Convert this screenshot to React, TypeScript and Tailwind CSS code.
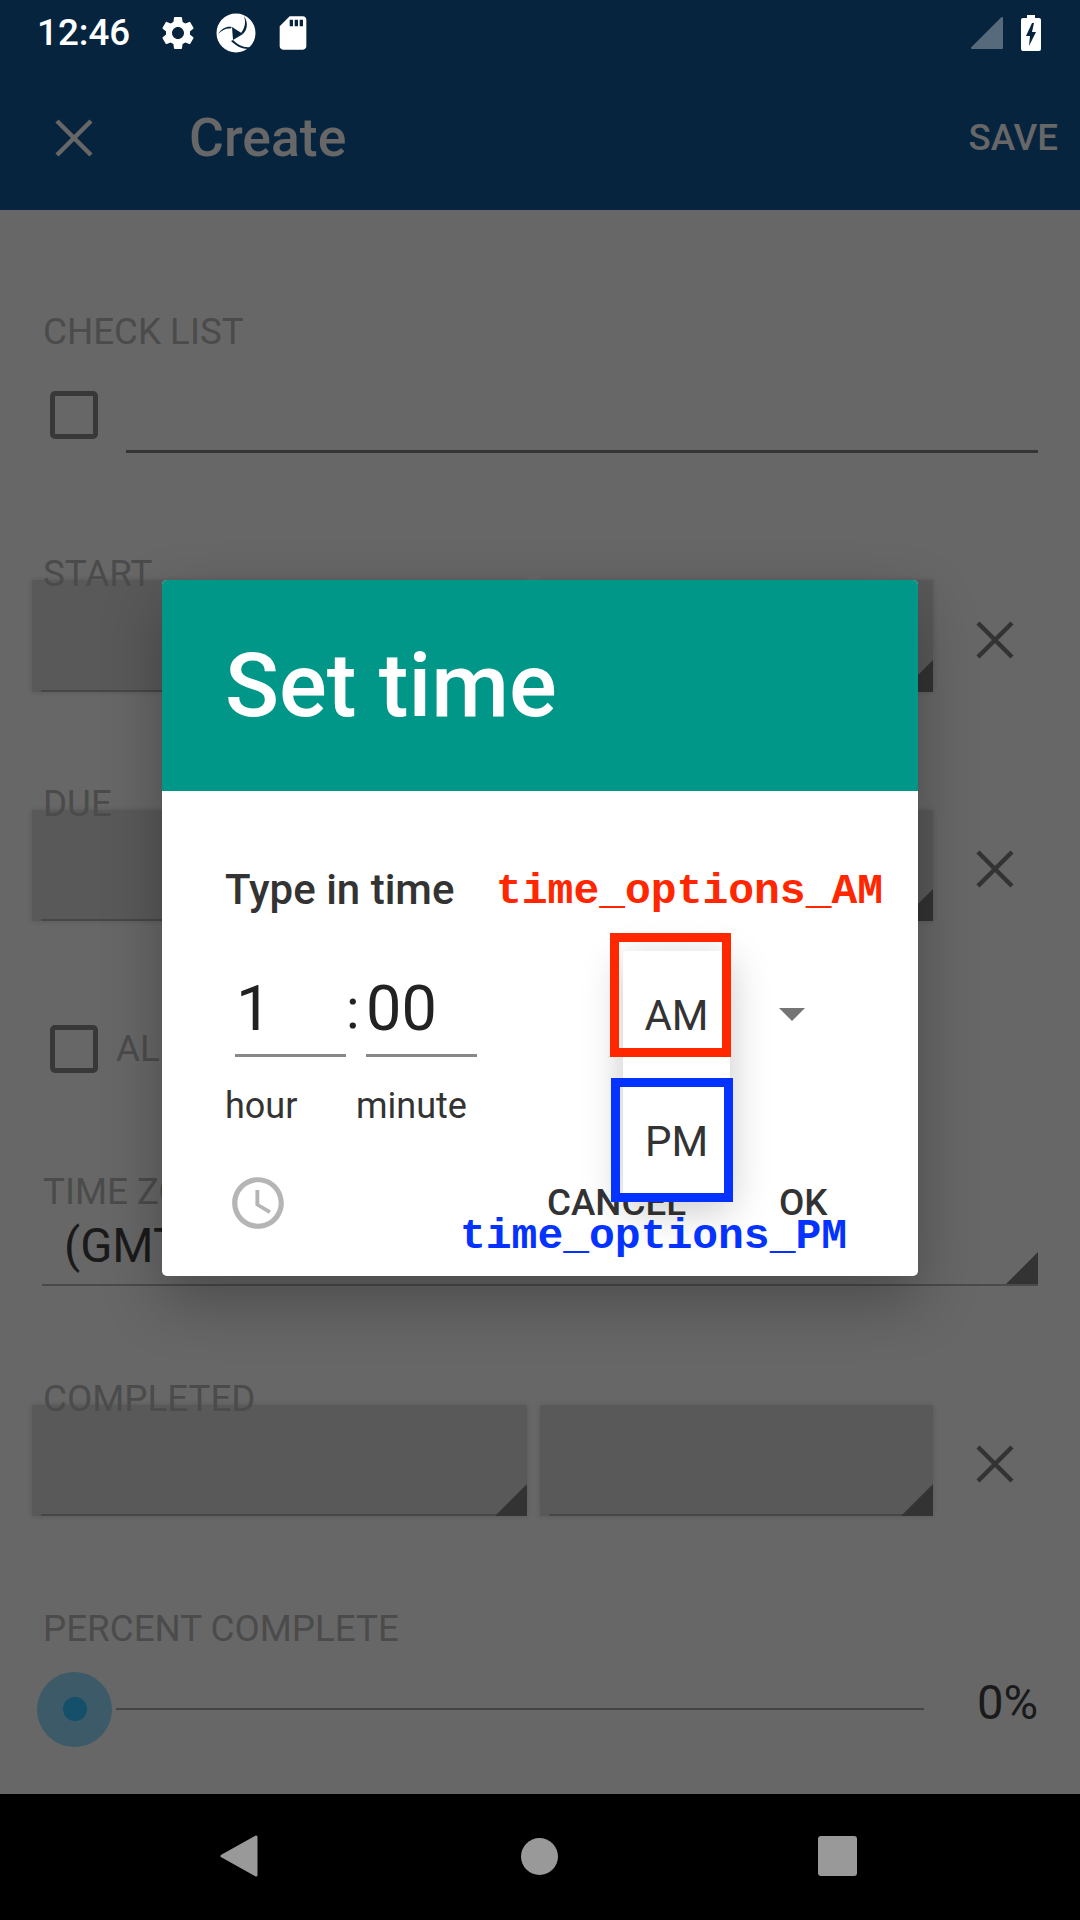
import React from 'react';
import { MdAccessTime, MdSdCard, MdSettings } from 'react-icons/md';

const CloseIcon: React.FC<{ color: string; size?: number }> = ({ color, size = 38 }) => (
  <svg width={size} height={size} viewBox="0 0 38 38">
    <path d="M2 2 L36 36 M36 2 L2 36" stroke={color} strokeWidth="4.5" fill="none" />
  </svg>
);

const Label: React.FC<{ text: string; className?: string }> = ({ text, className = '' }) => (
  <div className={`relative z-10 h-[40px] pl-[43px] text-[36.75px] leading-[42px] text-[#4b4b4b] ${className}`}>{text}</div>
);

const Checkbox: React.FC = () => (
  <div className="w-[48px] h-[48px] shrink-0 rounded-[5px] border-[5px] border-[#383838]" />
);

const Corner: React.FC = () => (
  <svg className="absolute right-0 bottom-0" width="32" height="32" viewBox="0 0 32 32">
    <path d="M32 0 L32 32 L0 32 Z" fill="#333333" />
  </svg>
);

const Spinner: React.FC<{ className: string }> = ({ className }) => (
  <div className={`relative bg-[#595959] shadow-[0_0_5px_rgba(0,0,0,0.14)] ${className}`}>
    <div className="absolute left-[9px] right-0 bottom-0 h-[2px] bg-[#474747]" />
    <Corner />
  </div>
);

const DateRow: React.FC<{ height: number }> = ({ height }) => (
  <div className="flex items-center mt-[-13px]" style={{ height }}>
    <div className="flex h-full pl-[32px] gap-[13px] w-[933px]">
      <Spinner className="w-[495px] h-full" />
      <Spinner className="w-[393px] h-full" />
    </div>
    <div className="ml-[43px] pt-[7px]">
      <CloseIcon color="#333333" />
    </div>
  </div>
);

const Logo: React.FC = () => (
  <svg width="40" height="40" viewBox="0 0 40 40">
    <circle cx="20" cy="20" r="19.5" fill="#ffffff" />
    <path d="M16 14 L27 21 L17 27 Z" fill="#07243f" />
    <path d="M2 21 C6 15 11 13 16 14 L14.5 15.5 C10 15 6 17 2 21 Z" fill="#07243f" />
    <path d="M28 3 C32 9 32 16 27 21 L25 20 C29 15 30 9 28 3 Z" fill="#07243f" />
    <path d="M17 27 C22 32 28 35 34 34 L32 36 C26 36 20 33 15 28 Z" fill="#07243f" />
  </svg>
);

const App: React.FC = () => {
  return (
    <div className="relative w-[1080px] h-[1920px] flex flex-col overflow-hidden bg-[#676767] font-['Roboto',sans-serif]">
      {/* status bar */}
      <div className="h-[65px] shrink-0 flex items-center bg-[#07243f] pl-[37px] pr-[39px]">
        <span className="text-[36.75px] font-medium text-white w-[125px]">12:46</span>
        <MdSettings className="text-white -ml-[4px]" size={40} />
        <div className="ml-[18px]"><Logo /></div>
        <MdSdCard className="text-white ml-[17px]" size={40} />
        <div className="ml-auto flex items-center gap-[18px]">
          <svg width="32" height="32" viewBox="0 0 32 32">
            <path d="M31 1 L31 31 L1 31 Z" fill="#566a7c" stroke="#566a7c" strokeWidth="2" strokeLinejoin="round" />
          </svg>
          <svg width="20" height="36" viewBox="0 0 20 36">
            <path d="M6 0 H14 V3 H18 Q20 3 20 5 V34 Q20 36 18 36 H2 Q0 36 0 34 V5 Q0 3 2 3 H6 Z" fill="#ffffff" />
            <path d="M11 8 L5 21 H9 L8 31 L15 17 H11 L13 8 Z" fill="#07243f" />
          </svg>
        </div>
      </div>

      {/* app bar */}
      <div className="h-[145px] shrink-0 flex items-center bg-[#07243f] pl-[55px] pr-[22px]">
        <CloseIcon color="#676767" />
        <span className="ml-[96px] pt-[2px] text-[53.5px] font-medium text-[#676767]">Create</span>
        <span className="ml-auto text-[36.75px] font-medium text-[#676767]">SAVE</span>
      </div>

      {/* form */}
      <div className="flex-1 flex flex-col">
        <Label text="CHECK LIST" className="mt-[101px]" />
        <div className="flex items-start h-[102px] pl-[50px]">
          <div className="mt-[40px]"><Checkbox /></div>
          <div className="ml-[28px] w-[912px] mt-[99px] h-[3px] bg-[#353535]" />
        </div>

        <Label text="START" className="mt-[100px]" />
        <DateRow height={112} />

        <Label text="DUE" className="mt-[91px]" />
        <DateRow height={111} />

        <div className="flex items-center h-[48px] mt-[104px] pl-[50px]">
          <Checkbox />
          <span className="ml-[18px] text-[36.75px] text-[#4b4b4b]">ALL DAY</span>
        </div>

        <Label text="TIME ZONE" className="mt-[98px]" />
        <div className="relative h-[75px] ml-[42px] w-[996px] border-b-2 border-[#4a4a4a]">
          <div className="pl-[22px] text-[47.25px] leading-[70px] text-[#1a1a1a]">(GMT-07:00) Pacific</div>
          <Corner />
        </div>

        <Label text="COMPLETED" className="mt-[92px]" />
        <DateRow height={111} />

        <Label text="PERCENT COMPLETE" className="mt-[92px]" />
        <div className="flex items-center h-[76px] mt-[23px] pl-[37px]">
          <div className="w-[75px] h-[75px] rounded-full bg-[#3d5a68] flex items-center justify-center shrink-0">
            <div className="w-[24px] h-[24px] rounded-full bg-[#15506b]" />
          </div>
          <div className="ml-[4px] w-[808px] h-[2px] bg-[#444444]" />
          <span className="ml-[53px] -mt-[12px] text-[47.25px] text-[#1a1a1a]">0%</span>
        </div>
      </div>

      {/* nav bar */}
      <div className="h-[126px] shrink-0 bg-black flex items-center pl-[220px] pb-[2px]">
        <svg width="38" height="42" viewBox="0 0 38 42">
          <path d="M36 2 L36 40 L2 21 Z" fill="#999999" stroke="#999999" strokeWidth="3" strokeLinejoin="round" />
        </svg>
        <div className="ml-[263px] w-[37px] h-[37px] rounded-full bg-[#999999]" />
        <div className="ml-[260px] w-[39px] h-[40px] rounded-[3px] bg-[#999999]" />
      </div>

      {/* time picker dialog */}
      <div className="absolute z-20 left-[162px] top-[580px] w-[756px] h-[696px] rounded-[5px] overflow-hidden bg-white shadow-[0_24px_60px_rgba(0,0,0,0.28)] flex flex-col">
        <div className="h-[211px] shrink-0 bg-[#009688] flex items-center pl-[63px]">
          <span className="text-[89.25px] font-medium text-white">Set time</span>
        </div>
        <div className="relative flex-1 flex flex-col pl-[63px]">
          <div className="h-[44px] mt-[76px] flex items-center text-[42px] font-medium text-[#333333]">
            Type in time
          </div>
          <div className="flex items-end mt-[39px] pl-[10px] h-[107px]">
            <div className="w-[111px] h-full border-b-[3px] border-[#888888] pl-[1px] text-[63px] leading-[118px] text-[#222222]">1</div>
            <span className="w-[20px] self-start text-[56px] leading-[118px] text-[#222222]">:</span>
            <div className="w-[111px] h-full border-b-[3px] border-[#888888] text-[63px] leading-[118px] text-[#222222]">00</div>
          </div>
          <div className="flex mt-[27px] text-[36px] leading-[44px] text-[#333333]">
            <span className="w-[131px]">hour</span>
            <span>minute</span>
          </div>
          <div className="flex items-center mt-[45px] h-[60px]">
            <MdAccessTime className="text-[#b5b5b5] ml-[2px]" size={62} />
            <span className="ml-[258px] text-[36.75px] font-medium text-[#333333]">CANCEL</span>
            <span className="ml-[93px] text-[36.75px] font-medium text-[#333333]">OK</span>
          </div>

          {/* AM / PM dropdown */}
          <div className="absolute left-[461px] top-[160px] w-[107px] h-[249px] rounded-[4px] bg-white shadow-[0_10px_40px_rgba(0,0,0,0.22)] flex flex-col items-center text-[42px] text-[#333333]">
            <span className="mt-[43px] leading-[44px]">AM</span>
            <span className="mt-[82px] leading-[44px]">PM</span>
          </div>
          <svg className="absolute left-[617px] top-[217px]" width="26" height="13" viewBox="0 0 26 13">
            <path d="M0 0 H26 L13 13 Z" fill="#757575" />
          </svg>
        </div>

        {/* annotation overlays */}
        <div className="absolute left-[448px] top-[353px] w-[121px] h-[124px] border-[9px] border-[#ff2600]" />
        <div className="absolute left-[449px] top-[498px] w-[122px] h-[124px] border-[9px] border-[#0433ff]" />
        <span className="absolute left-[334px] top-[288px] text-[43px] leading-[48px] font-bold text-[#ff2600] font-['Liberation_Mono',monospace]">time_options_AM</span>
        <span className="absolute left-[298px] top-[633px] text-[43px] leading-[48px] font-bold text-[#0433ff] font-['Liberation_Mono',monospace]">time_options_PM</span>
      </div>
    </div>
  );
};

export default App;
